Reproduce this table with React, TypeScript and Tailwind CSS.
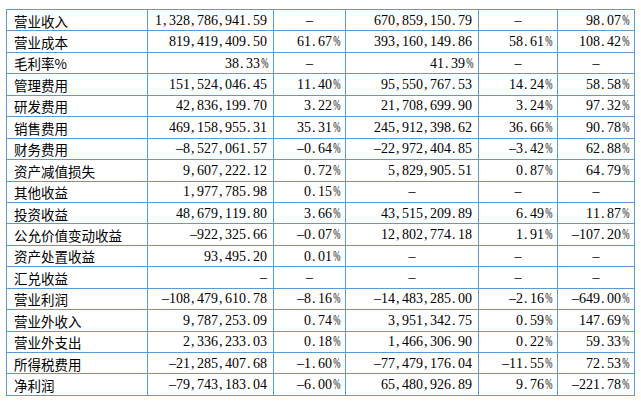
const ROWS: string[][] = [
  ['营业收入', '1,328,786,941.59', '-', '670,859,150.79', '-', '98.07%'],
  ['营业成本', '819,419,409.50', '61.67%', '393,160,149.86', '58.61%', '108.42%'],
  ['毛利率%', '38.33%', '-', '41.39%', '-', '-'],
  ['管理费用', '151,524,046.45', '11.40%', '95,550,767.53', '14.24%', '58.58%'],
  ['研发费用', '42,836,199.70', '3.22%', '21,708,699.90', '3.24%', '97.32%'],
  ['销售费用', '469,158,955.31', '35.31%', '245,912,398.62', '36.66%', '90.78%'],
  ['财务费用', '-8,527,061.57', '-0.64%', '-22,972,404.85', '-3.42%', '62.88%'],
  ['资产减值损失', '9,607,222.12', '0.72%', '5,829,905.51', '0.87%', '64.79%'],
  ['其他收益', '1,977,785.98', '0.15%', '-', '-', '-'],
  ['投资收益', '48,679,119.80', '3.66%', '43,515,209.89', '6.49%', '11.87%'],
  ['公允价值变动收益', '-922,325.66', '-0.07%', '12,802,774.18', '1.91%', '-107.20%'],
  ['资产处置收益', '93,495.20', '0.01%', '-', '-', '-'],
  // the first dash of this row sits at the right edge in the source sheet
  ['汇兑收益', '-|r', '-', '-', '-', '-'],
  ['营业利润', '-108,479,610.78', '-8.16%', '-14,483,285.00', '-2.16%', '-649.00%'],
  ['营业外收入', '9,787,253.09', '0.74%', '3,951,342.75', '0.59%', '147.69%'],
  ['营业外支出', '2,336,233.03', '0.18%', '1,466,306.90', '0.22%', '59.33%'],
  ['所得税费用', '-21,285,407.68', '-1.60%', '-77,479,176.04', '-11.55%', '72.53%'],
  ['净利润', '-79,743,183.04', '-6.00%', '65,480,926.89', '9.76%', '-221.78%'],
]

// half-width cells, like the song-ti digits in the screenshot
function Num({ value }: { value: string }) {
  return (
    <span className="whitespace-nowrap">
      {value.split('').map((c, i) => {
        if (c === ',' || c === '.') {
          return (
            <span key={i} className="inline-block w-[7px] pl-px text-left">
              {c}
            </span>
          )
        }
        if (c === '%') {
          return (
            <span key={i} className="inline-block w-[7px] text-center scale-x-[0.62]">
              {c}
            </span>
          )
        }
        return (
          <span key={i} className="inline-block w-[7px] text-center">
            {c === '-' ? '\u2013' : c}
          </span>
        )
      })}
    </span>
  )
}

export default function App() {
  return (
    <div className="w-[641px] h-[401px] bg-white pl-[6px] pt-[9px] text-black">
      <div
        className="grid w-[629px] grid-cols-[141px_126px_72px_133px_79px_77px] auto-rows-[21.44px] border-l border-t border-[#5b9bd5]"
        style={{ fontFamily: '"Liberation Serif", "Noto Sans CJK SC", serif' }}
      >
        {ROWS.map((row) =>
          row.map((cell, ci) => {
            if (ci === 0) {
              return (
                <div
                  key={row[0] + ci}
                  className="flex items-center border-b border-r border-[#5b9bd5] pl-[7px] pt-px text-[13.5px]"
                  style={{ fontFamily: '"Noto Sans CJK SC", sans-serif' }}
                >
                  {cell}
                </div>
              )
            }
            const dash = cell === '-'
            const rightDash = cell === '-|r'
            return (
              <div
                key={row[0] + ci}
                className={
                  dash
                    ? 'flex items-center justify-center border-b border-r border-[#5b9bd5] text-[14px]'
                    : 'flex items-center justify-end border-b border-r border-[#5b9bd5] pr-[6px] text-[14px]'
                }
              >
                <Num value={rightDash ? '-' : cell} />
              </div>
            )
          })
        )}
      </div>
    </div>
  )
}
